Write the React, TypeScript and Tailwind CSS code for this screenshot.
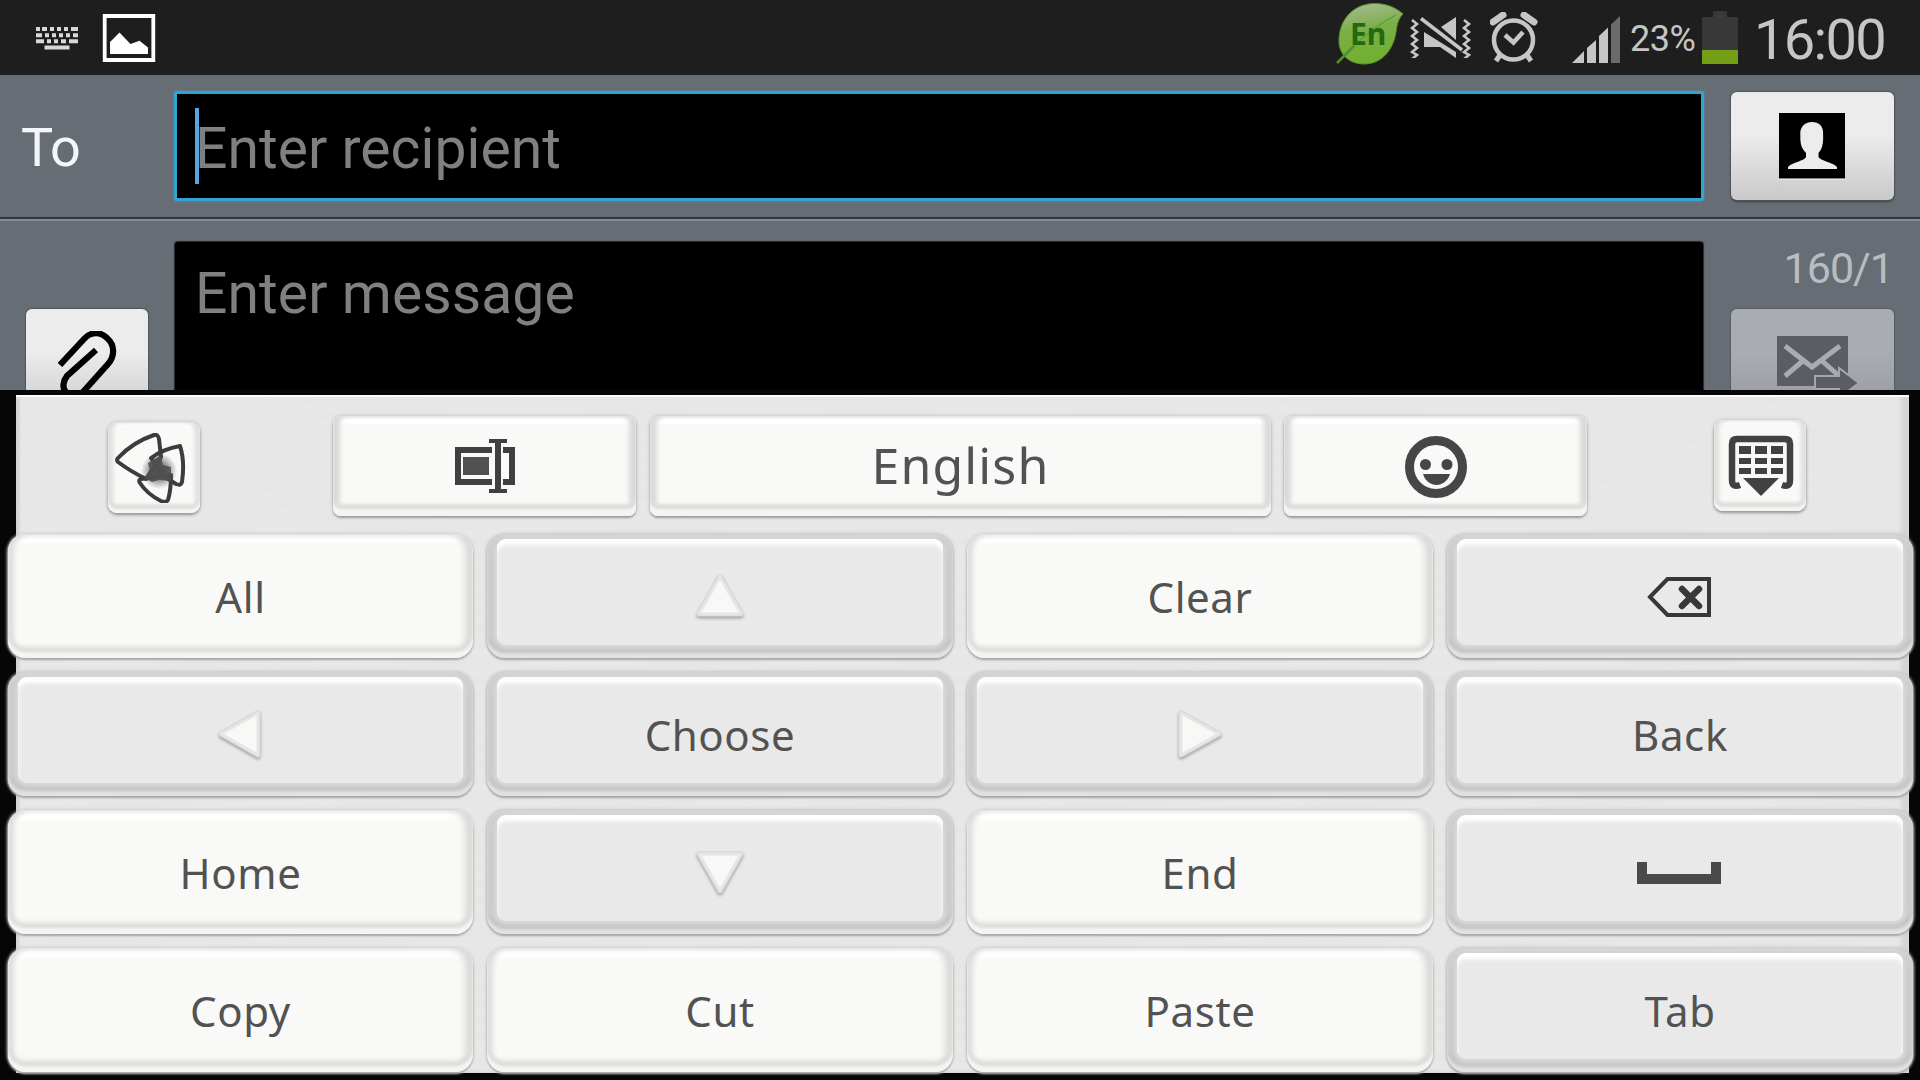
import React from "react";

type KeyTone = "light" | "gray";

function StatusBar() {
  return (
    <header className="flex h-[75px] shrink-0 items-start bg-[#1e1e1e] font-['Roboto',sans-serif] text-[#c6c6c6]">
      <svg className="mt-[27px] ml-[35px] h-[24px] w-[44px]" viewBox="0 0 44 24" fill="#d8d8d8">
        <path d="M1 0h4v4H1zM7 0h5v4H7zM15 0h4v4h-4zM22 0h4v4h-4zM29 0h4v4h-4zM36 0h7v4h-7zM1 6.300h6v4H1zM10 6.300h4v4h-4zM17 6.300h4v4h-4zM24 6.300h4v4h-4zM31 6.300h4v4h-4zM38 6.300h5v4h-5zM1 12.300h8v4H1zM12 12.300h4v4h-4zM19 12.300h4v4h-4zM26 12.300h5v4h-5zM34 12.300h9v4h-9zM9.500 18.400h25v4.200h-25z" />
      </svg>
      <svg className="mt-[14px] ml-[23px] h-[48px] w-[54px]" viewBox="0 0 54 48">
        <path fill="#fff" fillRule="evenodd" d="M.8 0h52.400v48H.8zM4.600 4v40h44.800V4z" />
        <path fill="#fff" d="M8 40V28l9.500-9.500L28.500 30l9-3.300 8.500 6.800V40z" />
      </svg>

      <div className="ml-auto flex items-start">
        <div className="relative mt-[3px] h-[62px] w-[68px]">
          <svg className="h-full w-full" viewBox="0 0 68 62">
            <defs>
              <linearGradient id="leaf" x1="0.4" y1="0" x2="0.6" y2="1">
                <stop offset="0" stopColor="#a3bb8e" />
                <stop offset="0.4" stopColor="#7bae48" />
                <stop offset="1" stopColor="#6fb02c" />
              </linearGradient>
            </defs>
            <path fill="url(#leaf)" stroke="#5d9427" strokeWidth="1" d="M67 11C58 3 48 .5 38 .5 17 1 3 17 3 38c0 14 11 23 25 23 17 0 29-13 32-32 1-9 3-14 7-18z" />
            <path fill="none" stroke="#4f9130" strokeWidth="2.500" d="M1 60L18 43" />
            <path fill="none" stroke="#5f9d32" strokeWidth="1.200" d="M18 43Q40 22 60 12" />
          </svg>
          <span className="absolute top-[15px] left-[14px] font-['Noto_Sans',sans-serif] text-[30px] leading-[32px] font-bold text-[#23690f]">En</span>
        </div>
        <svg className="mt-[15px] ml-[6px] h-[43px] w-[64px]" viewBox="0 0 64 43">
          <g fill="none" stroke="#c6c6c6" strokeWidth="2.600">
            <path d="M2 5l5 4-5 4 5 4-5 4 5 4-5 4 5 4-5 4 5 3-5 4" />
            <path d="M54 5l5 4-5 4 5 4-5 4 5 4-5 4 5 4-5 4 5 3-5 4" />
          </g>
          <path fill="#c6c6c6" d="M14 17v15h16l16 11v-6zM31 12L46 2v23z" />
          <path d="M11 3.500L52 35" stroke="#c6c6c6" strokeWidth="3.500" />
        </svg>
        <svg className="mt-[12px] ml-[16px] h-[51px] w-[48px]" viewBox="0 0 48 51" fill="none" stroke="#c6c6c6">
          <circle cx="23.500" cy="28" r="19.500" strokeWidth="4.500" />
          <path d="M15 23l8.500 7.500L33 20" strokeWidth="4.500" />
          <path d="M3 10L13 3M34 3l10 7" strokeWidth="7" strokeLinecap="round" />
          <path d="M10 43l-4 6M37 43l4 6" strokeWidth="5" />
        </svg>
        <svg className="mt-[16px] ml-[34px] h-[47px] w-[49px]" viewBox="0 0 49 47">
          <path fill="#c6c6c6" d="M0 47l12-12v12zM15 32l9-8v23h-9zM27 20l9-8.500V47h-9z" />
          <path fill="#6b6b6b" d="M39 8.500L48 0v47h-9z" />
        </svg>
        <span className="mt-[18px] ml-[9px] w-[67px] text-[36px] leading-[42px] tracking-[-0.5px]">23%</span>
        <svg className="mt-[11px] ml-[5px] h-[53px] w-[36px]" viewBox="0 0 36 53">
          <path fill="#383838" d="M11 0h14v6h11v34H0V6h11z" />
          <path fill="#729f16" d="M0 39h36v14H0z" />
        </svg>
        <span className="mt-[7px] mr-[32px] ml-[16px] w-[134px] text-[56px] leading-[66px] tracking-[-1.7px]">16:00</span>
      </div>
    </header>
  );
}

function Composer() {
  return (
    <main className="h-[315px] shrink-0 overflow-hidden bg-[#676d75] font-['Roboto',sans-serif]">
      <section className="flex h-[142px] items-start pt-[16px]">
        <span className="mt-[25px] ml-[21px] w-[153px] text-[54px] leading-[64px] tracking-[-0.5px] text-[#f4f6fa]">To</span>
        <div className="flex h-[110px] w-[1530px] items-center rounded-[3px] border-[3px] border-[#33a3cf] bg-black pl-[18px] shadow-[0_0_2px_#33a3cf]">
          <span className="h-[76px] w-[4px] shrink-0 bg-[#5aa5e0]" />
          <span className="-ml-[4px] pt-[6px] text-[57px] leading-[66px] tracking-[0.05px] text-[#808080]">Enter recipient</span>
        </div>
        <button className="mt-px ml-[27px] flex h-[108px] w-[163px] items-center justify-center rounded-[6px] bg-linear-to-b from-[#ececec] from-40% to-[#c9c9c9] shadow-[0_0_1px_1px_#50555c,0_2px_2px_#3d4147]">
          <svg className="mr-px h-[67px] w-[66px]" viewBox="0 0 66 67">
            <path d="M0 0h66v66H0z" />
            <path d="M0 66h66" stroke="#fff" strokeWidth="1" />
            <path fill="#ececec" d="M33 9c-7.500 0-12 5-11.700 12 .2 3 0 5 .2 7 .4 6 3 9 5.500 12v4c-1 4-14 5-18 10v2h49v-2c-4-5-17-6-18.500-10v-4c2.500-3 4-6 4.500-12 .3-2 .1-4 .1-7C44.500 13 40 9 33 9z" />
          </svg>
        </button>
      </section>
      <div className="h-[2px] bg-[#303743]" />
      <div className="h-[2px] bg-[#858a93]" />
      <section className="flex h-[220px] items-start">
        <button className="mt-[88px] ml-[26px] flex h-[109px] w-[122px] justify-center rounded-[6px] bg-linear-to-b from-[#ececec] from-40% to-[#c9c9c9] pt-[22px] pl-[2px] shadow-[0_0_1px_1px_#50555c]">
          <svg className="h-[72px] w-[60px]" viewBox="0 0 60 72" fill="none" stroke="#000" strokeWidth="6.200">
            <path d="M2 34L26 8C32 1 42 0 49 7C57 14 57 25 50 33L25 61C19 67 12 66 8 61C4 57 5 50 9 45L38 19" />
          </svg>
        </button>
        <div className="mt-[21px] ml-[27px] h-[200px] w-[1528px] rounded-[3px] bg-black pt-[19px] pl-[20px] shadow-[0_0_1px_1px_#25272a]">
          <span className="text-[57px] leading-[66px] tracking-[0.1px] text-[#808080]">Enter message</span>
        </div>
        <div className="ml-[28px] flex w-[163px] flex-col items-end">
          <span className="mt-[22px] mr-[1px] text-[43px] leading-[50px] tracking-[-1px] text-[#b9bdc2]">160/1</span>
          <button className="mt-[16px] flex h-[109px] w-[163px] rounded-[6px] bg-linear-to-b from-[#a9acb0] from-40% to-[#94979b] pt-[27px] pl-[46px] shadow-[0_0_1px_1px_#585d64]">
            <svg className="h-[62px] w-[84px]" viewBox="0 0 84 62">
              <path fill="#5a5e62" d="M0 0h71v50H0z" />
              <path d="M8 10L35 31 63 10M8 40L27 24M44 24l17 15" fill="none" stroke="#a9acb0" strokeWidth="5" />
              <path fill="#5a5e62" stroke="#a3a6aa" strokeWidth="2" d="M38 40h24v-8l20 15-20 15v-9H38z" />
            </svg>
          </button>
        </div>
      </section>
    </main>
  );
}

const smallKey =
  "flex items-center justify-center rounded-[9px] bg-[#f9f9f7] shadow-[0_2px_3px_#999,0_0_3px_1px_#ccc,inset_0_-4px_2px_#f5f5f4,inset_0_-9px_3px_#dfdfdd,inset_5px_0_4px_#dededc,inset_-5px_0_4px_#dededc,inset_0_4px_3px_#fff]";
const wideKey =
  "flex h-[100px] items-center justify-center rounded-[8px] bg-[#f9f9f7] shadow-[0_2px_2px_#a0a0a0,0_0_3px_1px_#ccc,inset_0_-7px_2px_#f4f4f3,inset_0_-12px_3px_#dededc,inset_7px_0_4px_#dadad9,inset_-7px_0_4px_#dadad9,inset_0_8px_3px_#fff]";

function Toolbar() {
  return (
    <div className="flex h-[117px] items-start pt-[1px]">
      <button className={`${smallKey} mt-[6px] ml-[92px] h-[91px] w-[92px] pr-[6px]`}>
        <svg className="h-[70px] w-[72px]" viewBox="0 0 72 70">
          <defs>
            <radialGradient id="core">
              <stop offset="0.2" stopColor="#4b4b4b" stopOpacity="0.9" />
              <stop offset="1" stopColor="#4b4b4b" stopOpacity="0" />
            </radialGradient>
          </defs>
          <g fill="none" stroke="#3c3c3c" strokeWidth="4" strokeLinejoin="round">
            <path d="M3 25Q18 9 39 2Q43 1 44 6L46 24L31 46Q15 38 3 29Q1 27 3 25z" />
            <path d="M36 25Q48 16 65 13Q70 28 67 49Q66 53 61 51L50 44z" />
            <path d="M26 46L56 42Q56 57 53 67Q51 70 46 68Q32 61 25 50Q23 47 26 46z" />
          </g>
          <circle cx="44" cy="38" r="18" fill="url(#core)" />
          <path fill="#505050" d="M33 30L46 22 48 32 56 34 56 48 44 47 37 49 29 45 35 38z" opacity="0.9" />
        </svg>
      </button>
      <button className={`${wideKey} ml-[133px] w-[303px] pl-px`}>
        <svg className="h-[54px] w-[60px]" viewBox="0 0 60 54">
          <g fill="#404040">
            <path fillRule="evenodd" d="M0 8h37v6H6v26h31v6H0zM48 8h12v38H48v-6h6V14h-6z" />
            <path fill="#505050" d="M8 18h26v18H8z" />
            <path d="M34 0h18v4h-6v46h6v4H34v-4h6V4h-6z" />
          </g>
        </svg>
      </button>
      <button className={`${wideKey} ml-[14px] w-[621px] pb-[3px] font-['Noto_Sans',sans-serif] text-[50px] leading-[60px] tracking-[1.1px] text-[#525252]`}>
        English
      </button>
      <button className={`${wideKey} ml-[13px] w-[303px] pt-px`}>
        <svg className="h-[62px] w-[62px]" viewBox="0 0 62 62">
          <circle cx="31" cy="31" r="26.500" fill="none" stroke="#464646" strokeWidth="9" />
          <circle cx="20.500" cy="28.500" r="5.500" fill="#464646" />
          <circle cx="42" cy="28.500" r="5.500" fill="#464646" />
          <path fill="#464646" d="M18 38h27c-2 7-8 11-13.500 11S20 45 18 38z" />
        </svg>
      </button>
      <button className={`${smallKey} mt-[4px] ml-[127px] h-[91px] w-[92px] pl-px`}>
        <svg className="h-[62px] w-[66px]" viewBox="0 0 66 62">
          <path d="M12 50Q4 53 4 45V9q0-5 5-5h48q5 0 5 5v36q0 8-8 5" fill="none" stroke="#414141" strokeWidth="6.500" />
          <path fill="#414141" d="M11 11h12v8H11zM27 11h12v8H27zM43 11h12v8H43zM11 23h12v6H11zM27 23h12v6H27zM43 23h12v6H43zM11 33h12v6H11zM27 33h12v6H27zM43 33h12v6H43zM15 43h36L33 61z" />
        </svg>
      </button>
    </div>
  );
}

const keyTones: Record<KeyTone, string> = {
  light:
    "bg-[#f9f9f7] pt-[2px] shadow-[0_2px_2px_#a8a8a8,0_0_3px_1px_#cecece,inset_0_-6px_3px_#f5f5f4,inset_0_-11px_5px_#dadad7,inset_6px_0_5px_#dededc,inset_-8px_0_6px_#dadad8,inset_0_9px_4px_#fff]",
  gray: "bg-[#cbcbcb] px-[10px] pt-[5px] pb-[13px] shadow-[0_2px_2px_#a8a8a8,0_0_3px_1px_#c6c6c6,inset_0_-5px_3px_#e2e2e2,inset_0_-12px_4px_#c4c4c4,inset_3px_0_3px_#d2d2d2,inset_-3px_0_3px_#d2d2d2,inset_0_3px_3px_#d4d4d4]",
};

function Key({ tone = "light", children }: { tone?: KeyTone; children: React.ReactNode }) {
  return (
    <button className={`${keyTones[tone]} h-[124px] rounded-[18px] font-['Noto_Sans',sans-serif] text-[42px] tracking-[0.6px] text-[#525252]`}>
      {tone === "gray" ? (
        <span className="flex h-full items-center justify-center rounded-[9px] bg-[#e9e9e9] pt-[10px] leading-[60px] shadow-[0_1px_5px_2px_#dcdcdc,inset_0_6px_4px_#fff]">
          {children}
        </span>
      ) : (
        <span className="flex h-full items-center justify-center leading-[60px]">{children}</span>
      )}
    </button>
  );
}

const arrows = {
  up: { points: "26,5 47,42 5,42", box: "h-[50px] w-[52px]", view: "0 0 52 50" },
  down: { points: "5,6 47,6 26,43", box: "h-[50px] w-[52px]", view: "0 0 52 50" },
  left: { points: "5,26 42,5 42,47", box: "h-[54px] w-[50px]", view: "0 0 50 54" },
  right: { points: "6,5 44,26 6,47", box: "h-[54px] w-[50px]", view: "0 0 50 54" },
};

function Arrow({ dir }: { dir: keyof typeof arrows }) {
  const a = arrows[dir];
  return (
    <svg className={`${a.box} overflow-visible drop-shadow-[0_2px_1.5px_#a4a4a4]`} viewBox={a.view}>
      <polygon points={a.points} fill="#e2e2e2" stroke="#d6d6d6" strokeWidth="5" strokeLinejoin="round" />
      <polygon points={a.points} fill="#f8f8f6" stroke="#e6e6e5" strokeWidth="3" strokeLinejoin="round" />
    </svg>
  );
}

function KeyGrid() {
  return (
    <div className="-mr-[5px] -ml-[8px] grid grid-cols-[465px_466px_466px_466px] gap-x-[14px] gap-y-[14px] pt-[22px]">
      <Key>All</Key>
      <Key tone="gray"><Arrow dir="up" /></Key>
      <Key>Clear</Key>
      <Key tone="gray">
        <svg className="mr-[2px] h-[40px] w-[64px]" viewBox="0 0 64 40" fill="none" stroke="#383838">
          <path d="M3 20L20.500 2H62v36H20.500z" strokeWidth="4" />
          <path d="M35 12l17 17M52 12L35 29" strokeWidth="6.500" strokeLinecap="round" />
        </svg>
      </Key>
      <Key tone="gray"><Arrow dir="left" /></Key>
      <Key tone="gray">Choose</Key>
      <Key tone="gray"><Arrow dir="right" /></Key>
      <Key tone="gray">Back</Key>
      <Key>Home</Key>
      <Key tone="gray"><Arrow dir="down" /></Key>
      <Key>End</Key>
      <Key tone="gray">
        <svg className="mr-[2px] h-[22px] w-[84px]" viewBox="0 0 84 22">
          <path fill="#4a4a4a" d="M0 0h10v12h64V0h10v22H0z" />
        </svg>
      </Key>
      <Key>Copy</Key>
      <Key>Cut</Key>
      <Key>Paste</Key>
      <Key tone="gray">Tab</Key>
    </div>
  );
}

export default function App() {
  return (
    <div className="flex h-[1080px] w-[1920px] flex-col overflow-hidden bg-[#060606]">
      <StatusBar />
      <Composer />
      <section className="mt-[5px] mr-[11px] ml-[16px] h-[678px] bg-[#e7e7e7] bg-[repeating-linear-gradient(176deg,#e8e8e8_0px,#e6e6e6_9px,#e8e8e8_17px)] pt-[20px] shadow-[inset_0_2px_1px_#fff,inset_-8px_0_4px_#d4d4d4,inset_3px_0_3px_#cfcfcf]">
        <Toolbar />
        <div className="-mt-[20px]">
          <KeyGrid />
        </div>
      </section>
    </div>
  );
}
